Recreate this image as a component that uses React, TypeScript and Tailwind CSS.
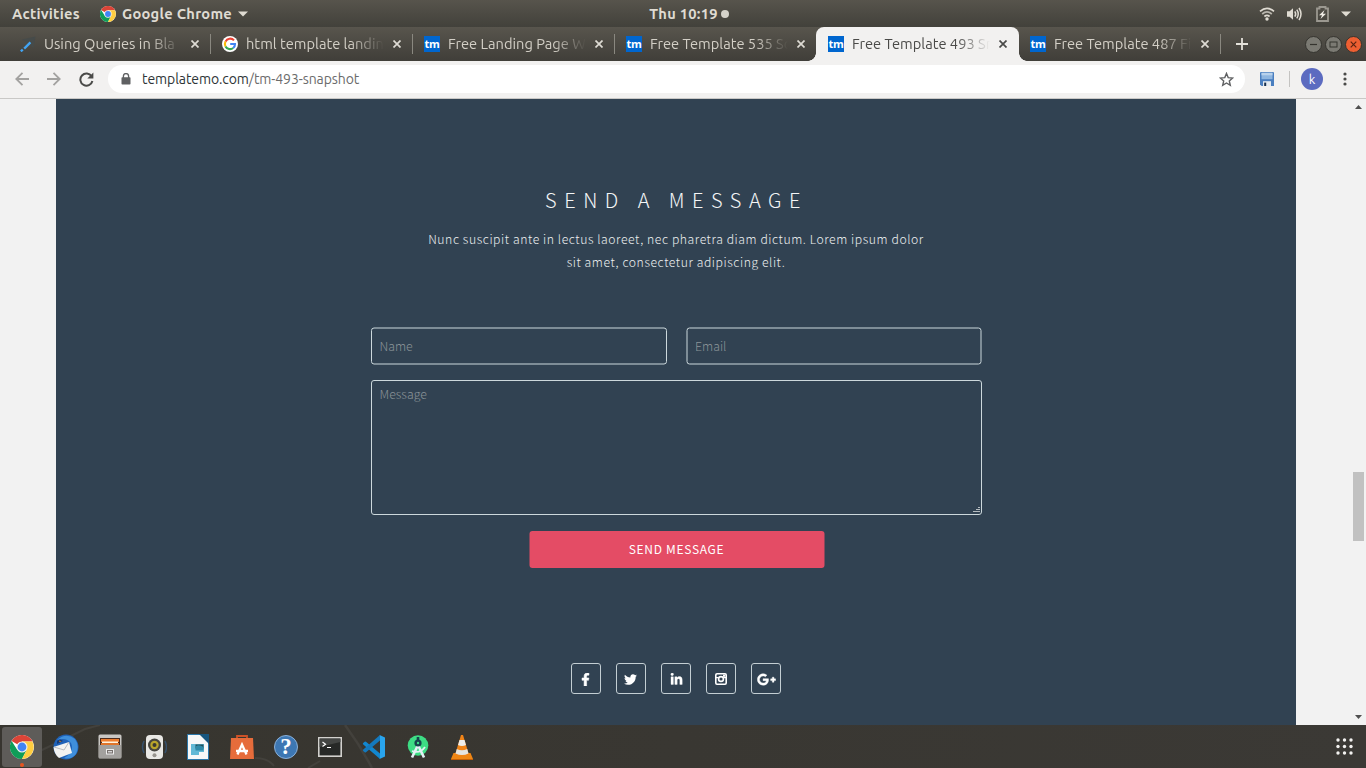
import React from "react";
import { FaFacebookF, FaTwitter, FaLinkedinIn, FaGooglePlusG } from "react-icons/fa";

const UI = "font-['Ubuntu','Noto_Sans',sans-serif]";

function Chrome({ size }: { size: number }) {
  return (
    <svg width={size} height={size} viewBox="0 0 48 48">
      <circle cx="24" cy="24" r="24" fill="#fff" />
      <path d="M24 24 L3.2 12 A24 24 0 0 1 44.8 12 L44.8 13 L24 13 Z" fill="#db4437" />
      <path d="M3.2 12 A24 24 0 0 0 24 48 L33.5 29.5 L24 24 L14.5 29.5 Z" fill="#0f9d58" />
      <path d="M24 13 L44.8 13 A24 24 0 0 1 24 48 L33.5 29.5 L24 24 Z" fill="#ffcd40" />
      <circle cx="24" cy="24" r="11" fill="#f1f1f1" />
      <circle cx="24" cy="24" r="8.8" fill="#4285f4" />
    </svg>
  );
}

function Google() {
  return (
    <svg width="16" height="16" viewBox="0 0 16 16">
      <circle cx="8" cy="8" r="8" fill="#fff" />
      <g fill="none" strokeWidth="2.1">
        <path d="M12 4.4A5.1 5.1 0 0 0 3.5 5.6" stroke="#ea4335" />
        <path d="M3.5 5.6A5.1 5.1 0 0 0 3.5 10.4" stroke="#fbbc05" />
        <path d="M3.5 10.4A5.1 5.1 0 0 0 11.2 12" stroke="#34a853" />
        <path d="M11.2 12A5 5 0 0 0 13 8H8.2" stroke="#4285f4" />
      </g>
    </svg>
  );
}

function Tm() {
  return (
    <span className="flex size-4 shrink-0 items-center justify-center bg-[#0066cf] pb-[2px] font-['Open_Sans',sans-serif] text-[11px] leading-none font-bold tracking-[-0.4px] text-white">
      tm
    </span>
  );
}

function Pen() {
  return (
    <svg width="16" height="16" viewBox="0 0 16 16">
      <path d="M2 3.5 L15.5 0.5 L13.5 12 L10 9 Z" fill="#464b4a" />
      <path d="M4.2 12.6 L10.4 6.4" stroke="#42a5f5" strokeWidth="2.3" />
      <path d="M0.8 15.4 L2.8 13.6" stroke="#42a5f5" strokeWidth="2.2" />
    </svg>
  );
}

function Close({ color }: { color: string }) {
  return (
    <svg width="8" height="8" viewBox="0 0 8 8" className="shrink-0">
      <path d="M0.5 0.5 L7.5 7.5 M7.5 0.5 L0.5 7.5" stroke={color} strokeWidth="1.7" />
    </svg>
  );
}

type TabInfo = { label: string; icon: React.ReactNode; active?: boolean; divider?: boolean };

const tabs: TabInfo[] = [
  { label: "Using Queries in Bla", icon: <Pen />, divider: true },
  { label: "html template landin", icon: <Google />, divider: true },
  { label: "Free Landing Page W", icon: <Tm />, divider: true },
  { label: "Free Template 535 So", icon: <Tm /> },
  { label: "Free Template 493 Sn", icon: <Tm />, active: true },
  { label: "Free Template 487 Fi", icon: <Tm />, divider: true },
];

function Tab({ tab }: { tab: TabInfo }) {
  return (
    <div
      className={
        "relative flex h-[34px] shrink-0 items-center pl-3 " +
        (tab.active ? "w-[203px] rounded-t-lg bg-[#f2f1f0] text-[#4a4a48]" : "w-[202px] text-[#d3cfc6]")
      }
    >
      {tab.active && (
        <>
          <span className="absolute bottom-0 -left-2 size-2 bg-[radial-gradient(circle_at_0_0,transparent_7.5px,#f2f1f0_8px)]" />
          <span className="absolute -right-2 bottom-0 size-2 bg-[radial-gradient(circle_at_100%_0,transparent_7.5px,#f2f1f0_8px)]" />
        </>
      )}
      {tab.icon}
      <span className="ml-2 w-[138px] shrink-0 overflow-hidden mask-r-from-76% mask-r-to-100% text-[14.67px] leading-5 whitespace-nowrap">
        {tab.label}
      </span>
      <span className="ml-[9px] flex">
        <Close color={tab.active ? "#4a4a48" : "#dedbd4"} />
      </span>
      {tab.divider && <span className="absolute top-[7px] right-[-1px] h-5 w-px bg-[#8a8880]" />}
    </div>
  );
}

function TopBar() {
  return (
    <div className="flex h-[27px] items-center bg-linear-to-b from-[#57544c] to-[#42413b] text-[14.67px] font-bold tracking-[0.27px] text-[#dfdbd2]">
      <div className="flex w-[579px] items-center pl-3">
        <span className="w-[88px]">Activities</span>
        <Chrome size={16} />
        <span className="ml-[6px] w-[112px] whitespace-nowrap">Google Chrome</span>
        <svg width="10" height="6" viewBox="0 0 10 6" className="ml-1">
          <path d="M0 0.5H10L5 5.5Z" fill="#dfdbd2" />
        </svg>
      </div>
      <div className="flex w-[220px] items-center justify-center gap-[3px]">
        <span>Thu 10:19</span>
        <span className="size-2 rounded-full bg-[#d5d2ca]" />
      </div>
      <div className="ml-auto flex items-center pr-[15px]">
        <svg width="16" height="16" viewBox="0 0 16 16" fill="none" stroke="#dfdbd2" strokeWidth="1.7">
          <path d="M1 5.4Q8 -0.8 15 5.4" />
          <path d="M3.2 8Q8 3.8 12.8 8" stroke="#b9b6ae" />
          <path d="M5.4 10.5Q8 8.2 10.6 10.5" />
          <circle cx="8" cy="13" r="1.7" fill="#dfdbd2" stroke="none" />
        </svg>
        <svg width="17" height="16" viewBox="0 0 17 16" className="ml-[11px]" fill="none" stroke="#dfdbd2" strokeWidth="1.5">
          <path d="M1 5.3H3.6L7 2.2V13.8L3.6 10.7H1Z" fill="#dfdbd2" stroke="none" />
          <path d="M8.8 5.3Q10.6 8 8.8 10.7" />
          <path d="M10.8 3.6Q13.7 8 10.8 12.4" />
          <path d="M13 2Q17 8 13 14" />
        </svg>
        <svg width="13" height="16" viewBox="0 0 13 16" className="ml-[13px]" fill="none">
          <path d="M3.5 2.5H1V15H12V2.5H9.5V1H3.5Z" stroke="#9b9890" strokeWidth="1.8" />
          <path d="M8.5 4 L3 9.3 H6 L4.5 13 L10 7.8 H7Z" fill="#eeebe4" />
        </svg>
        <svg width="10" height="6" viewBox="0 0 10 6" className="ml-[12px]">
          <path d="M0 0.5H10L5 5.5Z" fill="#dfdbd2" />
        </svg>
      </div>
    </div>
  );
}

function WindowButtons() {
  return (
    <div className="ml-auto flex gap-[3px] pr-[4.5px]">
      {["min", "max", "close"].map((k) => (
        <svg key={k} width="17" height="17" viewBox="0 0 17 17">
          <circle cx="8.5" cy="8.5" r="8" fill={k === "close" ? "#ee5f32" : "#7b7a73"} stroke="#35342f" />
          {k === "min" && <path d="M5 8.5H12" stroke="#35342f" strokeWidth="1.2" />}
          {k === "max" && <rect x="5" y="6" width="7" height="5" fill="none" stroke="#35342f" />}
          {k === "close" && <path d="M5.7 5.7L11.3 11.3M11.3 5.7L5.7 11.3" stroke="#5b2412" strokeWidth="1.2" />}
        </svg>
      ))}
    </div>
  );
}

function Toolbar() {
  return (
    <div className="flex h-[38px] items-center border-b border-[#c9c8c6] bg-[#f2f1f0] pb-px pl-[15px]">
      <svg width="14" height="14" viewBox="0 0 14 14" fill="none" stroke="#a3a2a0" strokeWidth="1.8">
        <path d="M14 7H1.5M7.5 0.8L1.3 7L7.5 13.2" />
      </svg>
      <svg width="14" height="14" viewBox="0 0 14 14" className="ml-[18px]" fill="none" stroke="#a3a2a0" strokeWidth="1.8">
        <path d="M0 7H12.5M6.5 0.8L12.7 7L6.5 13.2" />
      </svg>
      <svg width="15" height="15" viewBox="0 0 15 15" className="ml-[18px]" fill="none">
        <path d="M12.6 4.3A6.1 6.1 0 1 0 13.4 9" stroke="#4a4a48" strokeWidth="2" />
        <path d="M14.4 0.5V6.6H8.3Z" fill="#4a4a48" />
      </svg>
      <div className="ml-[14px] flex h-7 w-[1137px] items-center rounded-full bg-white pr-[11px] pl-[13px]">
        <svg width="10" height="12" viewBox="0 0 10 12">
          <path d="M2.4 5V3.2a2.6 2.6 0 0 1 5.2 0V5" fill="none" stroke="#5f6062" strokeWidth="1.3" />
          <rect x="0.5" y="4.2" width="9" height="7.3" rx="0.8" fill="#5f6062" />
        </svg>
        <span className="ml-[11px] text-[14px] tracking-[-0.08px] text-[#6b6b6b]">
          <span className="text-[#2e3436]">templatemo.com</span>/tm-493-snapshot
        </span>
        <svg width="15" height="15" viewBox="0 0 15 15" className="ml-auto">
          <path
            d="M7.5 1.4L9.2 5.6L13.7 6L10.3 8.9L11.3 13.3L7.5 11L3.7 13.3L4.7 8.9L1.3 6L5.8 5.6Z"
            fill="none"
            stroke="#5f6062"
            strokeWidth="1.4"
          />
        </svg>
      </div>
      <svg width="14" height="14" viewBox="0 0 14 14" className="ml-[15px]">
        <path d="M0 1Q0 0 1 0H13Q14 0 14 1V14H1.5L0 12.5Z" fill="#4a7fc0" />
        <rect x="1.5" y="0.8" width="11" height="6.4" fill="#8fb6e0" />
        <rect x="1.5" y="0.8" width="11" height="2.5" fill="#b9d2ec" />
        <rect x="3" y="9.2" width="8" height="4.8" fill="#e4eaf0" />
        <rect x="4.2" y="10.6" width="2" height="3.4" fill="#17304f" />
      </svg>
      <span className="ml-[15px] h-4 w-px bg-[#c4c3c1]" />
      <span className="ml-[11px] flex size-[22px] items-center justify-center rounded-full bg-[#5c6bc0] text-[13px] leading-none text-white">
        k
      </span>
      <svg width="4" height="14" viewBox="0 0 4 14" className="ml-[19.5px]" fill="#4a4a48">
        <circle cx="2" cy="2" r="1.6" />
        <circle cx="2" cy="7" r="1.6" />
        <circle cx="2" cy="12" r="1.6" />
      </svg>
    </div>
  );
}

function Instagram() {
  return (
    <svg width="12" height="12" viewBox="0 0 12 12" fill="none" stroke="#fff" className="mt-px">
      <rect x="0.8" y="0.8" width="10.4" height="10.4" rx="1.2" strokeWidth="1.6" />
      <path d="M0.7 4.6H3.4M8.6 4.6H11.3" strokeWidth="1.4" />
      <circle cx="6" cy="6" r="2.4" strokeWidth="1.6" />
      <rect x="8" y="1.6" width="2.2" height="2.2" fill="#fff" stroke="none" />
    </svg>
  );
}

const socials: React.ReactNode[] = [
  <FaFacebookF size={13} stroke="#fff" strokeWidth={20} className="mt-px" />,
  <FaTwitter size={13} className="mt-px" />,
  <FaLinkedinIn size={13} stroke="#fff" strokeWidth={14} className="mt-[2px]" />,
  <Instagram />,
  <FaGooglePlusG size={19} stroke="#fff" strokeWidth={14} className="mt-px" />,
];

const field =
  "rounded-[3px] border border-[#ccd8dc] bg-transparent px-2 text-[12.3px] font-light text-white placeholder:text-[#8b9498] placeholder:opacity-100 outline-none";

function Contact() {
  return (
    <main className="flex w-[1240px] flex-col items-center bg-[#314252] pt-[87px] font-['Source_Sans_Pro','Noto_Sans_CJK_SC',sans-serif] font-light text-white">
      <h2 className="h-7 pl-px text-[20px] leading-7 font-light tracking-[7.5px] whitespace-nowrap text-[#f4f6f7]">
        SEND A MESSAGE
      </h2>
      <p className="mt-[14px] h-[46px] text-center text-[12.2px] leading-[22.5px] tracking-[0.575px] whitespace-nowrap text-[#eceff0]">
        Nunc suscipit ante in lectus laoreet, nec pharetra diam dictum. Lorem ipsum dolor
        <br />
        sit amet, consectetur adipiscing elit.
      </p>
      <form className="mt-[54px] flex w-[611px] flex-col items-center" onSubmit={(e) => e.preventDefault()}>
        <div className="flex w-full -translate-y-[0.5px] gap-[19px]">
          <input className={field + " h-[37px] w-[296px] pb-[2px]"} placeholder="Name" />
          <input className={field + " h-[37px] w-[295px] translate-x-[0.5px] pb-[2px]"} placeholder="Email" />
        </div>
        <div className="relative mt-[15px] w-full">
          <textarea className={field + " block h-[135px] w-full resize-none py-1"} placeholder="Message" />
          <svg width="7" height="6" viewBox="0 0 7 6" className="absolute right-[2px] bottom-[2px]">
            <path d="M5 0.5H7M3 2.5H7M0 4.5H7" stroke="#b5bcc0" />
          </svg>
        </div>
        <button className="mt-[16px] h-[37px] w-[295px] translate-x-[0.5px] rounded-[3px] bg-[#e44c65] pb-px text-[12px] font-normal tracking-[0.7px] text-white">
          SEND MESSAGE
        </button>
      </form>
      <div className="mt-[95px] flex gap-[14.6px]">
        {socials.map((icon, i) => (
          <a
            key={i}
            className="flex h-[31px] w-[30.5px] items-center justify-center rounded-[3px] border border-[#c3ced3]"
          >
            {icon}
          </a>
        ))}
      </div>
    </main>
  );
}

function Scrollbar() {
  return (
    <div className="ml-auto flex w-[15px] flex-col items-center pt-[6px] pb-[6px]">
      <svg width="7" height="4" viewBox="0 0 7 4">
        <path d="M0 4L3.5 0L7 4Z" fill="#505050" />
      </svg>
      <div className="mt-[363px] h-[69px] w-[11px] bg-[#c1c1c1]" />
      <svg width="7" height="4" viewBox="0 0 7 4" className="mt-auto">
        <path d="M0 0L3.5 4L7 0Z" fill="#505050" />
      </svg>
    </div>
  );
}

const dockIcons: React.ReactNode[] = [
  <svg width="26" height="26" viewBox="0 0 26 26">
    <circle cx="13" cy="13" r="12.5" fill="#1f62b8" />
    <path d="M4 6Q13 -2 22 5Q27 12 23 20Q18 26 11 24Q22 18 18 9Q13 3 4 6Z" fill="#3f8fdc" />
    <path d="M0.5 13L16 8L19 19L6 24Q1 20 0.5 13Z" fill="#f3f3f1" />
    <path d="M1 13L11 16L16 8" fill="none" stroke="#b9bcc0" />
    <path d="M4 7Q7 4 10 7L4 10Z" fill="#173b78" />
    <path d="M6 6.5L8.5 7.5L6.5 8Z" fill="#d88a1d" />
  </svg>,
  <svg width="24" height="25" viewBox="0 0 24 25">
    <rect x="0.5" y="0.5" width="23" height="24" rx="1.5" fill="#c9c7c4" />
    <rect x="2" y="4" width="20" height="7" fill="#4b2b1d" />
    <rect x="3" y="5" width="18" height="3" fill="#ee7d2e" />
    <rect x="4" y="7.5" width="16" height="1.5" fill="#fff3df" />
    <rect x="3" y="9" width="18" height="2" fill="#e0752b" />
    <rect x="1" y="11" width="22" height="13" fill="#a3a19e" />
    <rect x="8.5" y="15.5" width="7" height="4.5" fill="#77716e" stroke="#eee" />
    <path d="M10 17.8H14" stroke="#fff" />
  </svg>,
  <svg width="26" height="26" viewBox="0 0 26 26">
    <path d="M3 7Q0 13 3 19M24 7Q27 13 24 19" fill="none" stroke="#36516d" strokeWidth="1.5" />
    <rect x="5" y="1" width="17" height="24" rx="4" fill="#e9e8e5" />
    <circle cx="13.5" cy="11" r="6.5" fill="#464540" />
    <circle cx="13.5" cy="11" r="4.2" fill="#b9a52a" />
    <circle cx="13.5" cy="11" r="2" fill="#393832" />
    <circle cx="13.5" cy="21.3" r="2" fill="#96938d" />
  </svg>,
  <svg width="22" height="26" viewBox="0 0 22 26">
    <path d="M0.5 0.5H14L21.5 8V25.5H0.5Z" fill="#f7f8f8" stroke="#2c78aa" />
    <path d="M12 0H22V10Z" fill="#17567f" />
    <path d="M4 10H17V18H12V21H4Z" fill="#62b9d6" />
    <path d="M8.5 10.5H16.5V14.5H8.5Z" fill="#224f59" />
    <path d="M8.5 12.5Q12 10 16.5 13V16.5H8.5Z" fill="#2f8aa8" />
  </svg>,
  <svg width="26" height="26" viewBox="0 0 26 26">
    <path d="M8 6V2H18V6" fill="none" stroke="#cc5228" strokeWidth="1.8" />
    <path d="M2 4H24L25 25H1Z" fill="#e66c3b" />
    <path d="M8.5 20.5L13 10.5L17.5 20.5M7 17H19" stroke="#fff" strokeWidth="2.3" fill="none" />
  </svg>,
  <span className="flex size-6 items-center justify-center rounded-full border border-[#8bb0d7] bg-[#3d77b3] font-['Liberation_Serif',serif] text-[23px] leading-none font-bold text-white">
    ?
  </span>,
  <svg width="24" height="20" viewBox="0 0 24 20">
    <rect x="0.8" y="0.8" width="22.4" height="18.4" fill="#272927" stroke="#d2d1ce" strokeWidth="1.6" />
    <path d="M1.6 10V1.6H22.4V5Z" fill="#434543" />
    <path d="M4.5 5L7.5 7.2L4.5 9.4M9 10.5H13" fill="none" stroke="#fff" strokeWidth="1.2" />
  </svg>,
  <svg width="24" height="24" viewBox="0 0 24 24">
    <path d="M1.2 8.1L2.7 6.7Q3.3 6.3 4 6.8L18 18.5V24L1 9.2Q0.7 8.6 1.2 8.1Z" fill="#1287cf" />
    <path d="M1.2 15.9L2.7 17.3Q3.3 17.7 4 17.2L18 5.5V0L1 14.8Q0.7 15.4 1.2 15.9Z" fill="#1479bd" />
    <path d="M17.6 0L23 2.5V21.5L17.6 24Q18 23.5 18 22V2Q18 0.6 17.6 0Z" fill="#29a5ee" />
  </svg>,
  <svg width="22" height="25" viewBox="0 0 22 25">
    <circle cx="11" cy="11.5" r="10.3" fill="#3ddc84" />
    <path d="M11 11L5 23.5M11 11L17 23.5" stroke="#e4f0f5" strokeWidth="2.6" />
    <path d="M5 17Q13 20 18 13" fill="none" stroke="#e4f0f5" strokeWidth="1.8" />
    <rect x="9.7" y="3" width="2.6" height="4" fill="#17434d" />
    <circle cx="11" cy="9" r="3.6" fill="#17434d" />
    <circle cx="11" cy="9" r="1.2" fill="#3ddc84" />
  </svg>,
  <svg width="24" height="26" viewBox="0 0 24 26">
    <path d="M3.5 19H20.5L23 25H1Z" fill="#ef8615" />
    <path d="M11 1H13L19 21Q12 24 5 21Z" fill="#f08418" />
    <path d="M9.5 6H14.5L16 11Q12 13 8 11Z" fill="#eeedeb" />
    <path d="M6.8 15Q12 17.5 17.2 15L18.5 19.5Q12 22.5 5.5 19.5Z" fill="#e5e4e1" />
    <path d="M1 25.5H23" stroke="#c45f06" />
  </svg>,
];

function Dock() {
  return (
    <div className="relative flex h-[43px] items-center bg-linear-to-r from-[#37352f] via-[#393732] to-[#3b3935] pl-[2px]">
      <svg width="500" height="43" viewBox="0 0 500 43" className="absolute top-0 left-0" fill="none" stroke="#43413c">
        <path d="M345 0Q360 20 372 43" strokeWidth="2.5" />
        <path d="M40 26L85 4L100 0" strokeWidth="2" />
        <path d="M255 33Q268 33 274 41M308 43L320 36" strokeWidth="2" />
      </svg>
      <div className="relative flex size-10 items-center justify-center rounded-[3px] bg-[#5e5c59]">
        <Chrome size={24} />
        <span className="absolute bottom-0 left-[18px] size-1 rounded-full bg-[#e95420]" />
      </div>
      {dockIcons.map((icon, i) => (
        <div key={i} className="relative ml-1 flex size-10 items-center justify-center">
          {icon}
        </div>
      ))}
      <svg width="17" height="17" viewBox="0 0 17 17" className="mr-[13.5px] ml-auto" fill="#f3f2f0">
        {[2, 8.5, 15].map((y) => [2, 8.5, 15].map((x) => <circle key={x + "-" + y} cx={x} cy={y} r="1.7" />))}
      </svg>
    </div>
  );
}

export default function App() {
  return (
    <div className={"flex h-[768px] w-[1366px] flex-col overflow-hidden " + UI}>
      <TopBar />
      <div className="flex h-[34px] items-center bg-linear-to-b from-[#58554d] to-[#403e39] pl-2">
        {tabs.map((t, i) => (
          <div key={t.label} className={i === 5 ? "-ml-px flex w-[202px]" : "flex"}>
            <Tab tab={t} />
          </div>
        ))}
        <svg width="12" height="12" viewBox="0 0 12 12" className="ml-4">
          <path d="M6 0V12M0 6H12" stroke="#e4e1da" strokeWidth="1.8" />
        </svg>
        <WindowButtons />
      </div>
      <Toolbar />
      <div className="flex h-[626px] bg-[#f2f2f2] pl-14">
        <Contact />
        <Scrollbar />
      </div>
      <Dock />
    </div>
  );
}
